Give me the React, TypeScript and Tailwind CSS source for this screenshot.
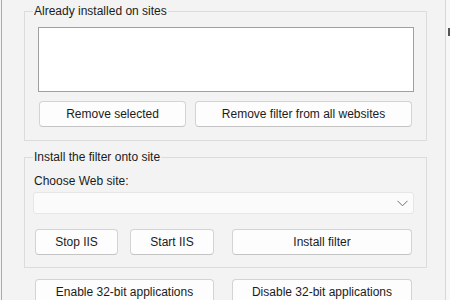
function Btn({ label, w }: { label: string; w: string }) {
  return (
    <button
      className={`${w} h-[26px] shrink-0 rounded-[4px] border border-[#d3d3d3] border-b-[#c4c4c4] bg-[#fdfdfd] text-[12px] text-[#1b1b1b]`}
    >
      {label}
    </button>
  );
}

export default function App() {
  return (
    <div className="flex h-[300px] w-[450px] overflow-hidden bg-[#f3f3f3] font-['Liberation_Sans',Arial,sans-serif] text-[12px] leading-[16px] text-[#1b1b1b]">
      <div className="ml-[1px] w-px bg-[#a9a9a9]" />

      <div className="flex flex-1 flex-col pl-[22px] pr-[18px]">
        <fieldset className="mt-[3px] w-[403px] border border-[#dcdcdc] pb-[13px] pl-[13px] pr-[12px]">
          <legend className="-ml-[5px] px-[1px]">Already installed on sites</legend>
          <div className="mt-[8px] h-[65px] w-[376px] border border-[#a0a0a0] bg-white" />
          <div className="mt-[9px] flex pl-[1px]">
            <Btn label="Remove selected" w="w-[147px]" />
            <div className="ml-[9px]">
              <Btn label="Remove filter from all websites" w="w-[217px]" />
            </div>
          </div>
        </fieldset>

        <fieldset className="mt-[8px] w-[403px] border border-[#dcdcdc] pb-[12px] pl-[8px] pr-[12px]">
          <legend className="px-[1px]">Install the filter onto site</legend>
          <div className="mt-[8px] pl-[1px]">Choose Web site:</div>
          <div className="mt-[3px] flex h-[22px] w-[381px] items-center justify-end rounded-[3px] border border-[#e6e6e6] bg-[#fbfbfb] pr-[5px]">
            <svg width="11" height="7" viewBox="0 0 11 7" fill="none">
              <path d="M0.5 0.8 L5.5 5.8 L10.5 0.8" stroke="#707070" strokeWidth="1" />
            </svg>
          </div>
          <div className="mt-[15px] flex pl-[2px]">
            <Btn label="Stop IIS" w="w-[83px]" />
            <div className="ml-[12px]">
              <Btn label="Start IIS" w="w-[84px]" />
            </div>
            <div className="ml-[18px]">
              <Btn label="Install filter" w="w-[180px]" />
            </div>
          </div>
        </fieldset>

        <div className="mt-[11px] flex pl-[11px]">
          <Btn label="Enable 32-bit applications" w="w-[179px]" />
          <div className="ml-[18px]">
            <Btn label="Disable 32-bit applications" w="w-[180px]" />
          </div>
        </div>
      </div>

      <div className="w-px bg-[#d6d6d6]" />
      <div className="flex w-[4px] flex-col bg-[#f7f7f7]">
        <div className="ml-[2px] mt-[28px] h-[8px] w-[2px] bg-[#555555]" />
      </div>
    </div>
  );
}
